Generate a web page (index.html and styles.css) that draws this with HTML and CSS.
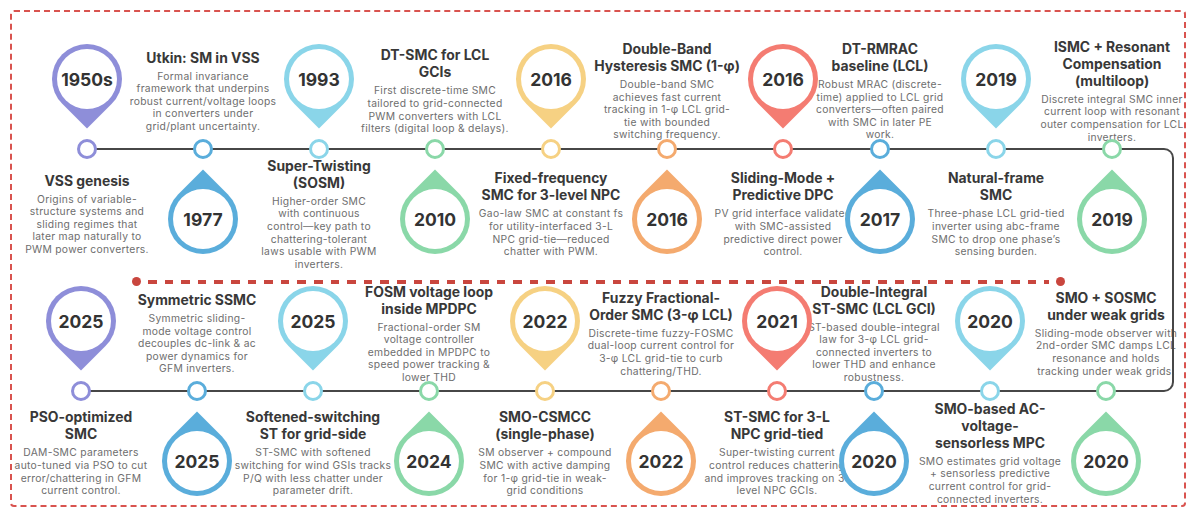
FILE: index.html
```html
<!DOCTYPE html>
<html lang="en">
<head>
<meta charset="utf-8">
<title>Sliding-mode control timeline</title>
<link rel="stylesheet" href="styles.css">
</head>
<body>
<div class="frame">
  <div class="track" aria-hidden="true"></div>

  <section class="row row-1">
    <div class="item pin-top c-purple">
      <div class="slot slot-top"><div class="pin"><span class="year">1950s</span></div></div>
      <span class="marker"></span>
      <div class="slot slot-bottom"><div class="text"><h3 class="title">VSS genesis</h3><p class="desc">Origins of variable-<br>structure systems and<br>sliding regimes that<br>later map naturally to<br>PWM power converters.</p></div></div>
    </div>
    <div class="item pin-bottom c-blue">
      <div class="slot slot-top"><div class="text"><h3 class="title">Utkin: SM in VSS</h3><p class="desc">Formal invariance<br>framework that underpins<br>robust current/voltage loops<br>in converters under<br>grid/plant uncertainty.</p></div></div>
      <span class="marker"></span>
      <div class="slot slot-bottom"><div class="pin"><span class="year">1977</span></div></div>
    </div>
    <div class="item pin-top c-cyan">
      <div class="slot slot-top"><div class="pin"><span class="year">1993</span></div></div>
      <span class="marker"></span>
      <div class="slot slot-bottom"><div class="text"><h3 class="title">Super-Twisting<br>(SOSM)</h3><p class="desc">Higher-order SMC<br>with continuous<br>control—key path to<br>chattering-tolerant<br>laws usable with PWM<br>inverters.</p></div></div>
    </div>
    <div class="item pin-bottom c-green">
      <div class="slot slot-top"><div class="text"><h3 class="title">DT-SMC for LCL<br>GCIs</h3><p class="desc">First discrete-time SMC<br>tailored to grid-connected<br>PWM converters with LCL<br>filters (digital loop &amp; delays).</p></div></div>
      <span class="marker"></span>
      <div class="slot slot-bottom"><div class="pin"><span class="year">2010</span></div></div>
    </div>
    <div class="item pin-top c-yellow">
      <div class="slot slot-top"><div class="pin"><span class="year">2016</span></div></div>
      <span class="marker"></span>
      <div class="slot slot-bottom"><div class="text"><h3 class="title">Fixed-frequency<br>SMC for 3-level NPC</h3><p class="desc">Gao-law SMC at constant fs<br>for utility-interfaced 3-L<br>NPC grid-tie—reduced<br>chatter with PWM.</p></div></div>
    </div>
    <div class="item pin-bottom c-orange">
      <div class="slot slot-top"><div class="text"><h3 class="title">Double-Band<br>Hysteresis SMC (1-φ)</h3><p class="desc">Double-band SMC<br>achieves fast current<br>tracking in 1-φ LCL grid-<br>tie with bounded<br>switching frequency.</p></div></div>
      <span class="marker"></span>
      <div class="slot slot-bottom"><div class="pin"><span class="year">2016</span></div></div>
    </div>
    <div class="item pin-top c-red">
      <div class="slot slot-top"><div class="pin"><span class="year">2016</span></div></div>
      <span class="marker"></span>
      <div class="slot slot-bottom"><div class="text"><h3 class="title">Sliding-Mode +<br>Predictive DPC</h3><p class="desc">PV grid interface validated<br>with SMC-assisted<br>predictive direct power<br>control.</p></div></div>
    </div>
    <div class="item near pin-bottom c-blue">
      <div class="slot slot-top"><div class="text"><h3 class="title">DT-RMRAC<br>baseline (LCL)</h3><p class="desc">Robust MRAC (discrete-<br>time) applied to LCL grid<br>converters—often paired<br>with SMC in later PE<br>work.</p></div></div>
      <span class="marker"></span>
      <div class="slot slot-bottom"><div class="pin"><span class="year">2017</span></div></div>
    </div>
    <div class="item pin-top c-cyan">
      <div class="slot slot-top"><div class="pin"><span class="year">2019</span></div></div>
      <span class="marker"></span>
      <div class="slot slot-bottom"><div class="text"><h3 class="title">Natural-frame<br>SMC</h3><p class="desc">Three-phase LCL grid-tied<br>inverter using abc-frame<br>SMC to drop one phase’s<br>sensing burden.</p></div></div>
    </div>
    <div class="item pin-bottom c-green">
      <div class="slot slot-top"><div class="text"><h3 class="title">ISMC + Resonant<br>Compensation<br>(multiloop)</h3><p class="desc">Discrete integral SMC inner<br>current loop with resonant<br>outer compensation for LCL<br>inverters.</p></div></div>
      <span class="marker"></span>
      <div class="slot slot-bottom"><div class="pin"><span class="year">2019</span></div></div>
    </div>
  </section>

  <div class="divider" aria-hidden="true"><span class="dot"></span><span class="dashes"></span><span class="dot"></span></div>

  <section class="row row-2">
    <div class="item pin-top c-purple">
      <div class="slot slot-top"><div class="pin"><span class="year">2025</span></div></div>
      <span class="marker"></span>
      <div class="slot slot-bottom"><div class="text"><h3 class="title">PSO-optimized<br>SMC</h3><p class="desc">DAM-SMC parameters<br>auto-tuned via PSO to cut<br>error/chattering in GFM<br>current control.</p></div></div>
    </div>
    <div class="item pin-bottom c-blue">
      <div class="slot slot-top"><div class="text"><h3 class="title">Symmetric SSMC</h3><p class="desc">Symmetric sliding-<br>mode voltage control<br>decouples dc-link &amp; ac<br>power dynamics for<br>GFM inverters.</p></div></div>
      <span class="marker"></span>
      <div class="slot slot-bottom"><div class="pin"><span class="year">2025</span></div></div>
    </div>
    <div class="item pin-top c-cyan">
      <div class="slot slot-top"><div class="pin"><span class="year">2025</span></div></div>
      <span class="marker"></span>
      <div class="slot slot-bottom"><div class="text"><h3 class="title">Softened-switching<br>ST for grid-side</h3><p class="desc">ST-SMC with softened<br>switching for wind GSIs tracks<br>P/Q with less chatter under<br>parameter drift.</p></div></div>
    </div>
    <div class="item pin-bottom c-green">
      <div class="slot slot-top"><div class="text"><h3 class="title">FOSM voltage loop<br>inside MPDPC</h3><p class="desc">Fractional-order SM<br>voltage controller<br>embedded in MPDPC to<br>speed power tracking &amp;<br>lower THD</p></div></div>
      <span class="marker"></span>
      <div class="slot slot-bottom"><div class="pin"><span class="year">2024</span></div></div>
    </div>
    <div class="item pin-top c-yellow">
      <div class="slot slot-top"><div class="pin"><span class="year">2022</span></div></div>
      <span class="marker"></span>
      <div class="slot slot-bottom"><div class="text"><h3 class="title">SMO-CSMCC<br>(single-phase)</h3><p class="desc">SM observer + compound<br>SMC with active damping<br>for 1-φ grid-tie in weak-<br>grid conditions</p></div></div>
    </div>
    <div class="item pin-bottom c-orange">
      <div class="slot slot-top"><div class="text"><h3 class="title">Fuzzy Fractional-<br>Order SMC (3-φ LCL)</h3><p class="desc">Discrete-time fuzzy-FOSMC<br>dual-loop current control for<br>3-φ LCL grid-tie to curb<br>chattering/THD.</p></div></div>
      <span class="marker"></span>
      <div class="slot slot-bottom"><div class="pin"><span class="year">2022</span></div></div>
    </div>
    <div class="item pin-top c-red">
      <div class="slot slot-top"><div class="pin"><span class="year">2021</span></div></div>
      <span class="marker"></span>
      <div class="slot slot-bottom"><div class="text"><h3 class="title">ST-SMC for 3-L<br>NPC grid-tied</h3><p class="desc">Super-twisting current<br>control reduces chattering<br>and improves tracking on 3-<br>level NPC GCIs.</p></div></div>
    </div>
    <div class="item near pin-bottom c-blue">
      <div class="slot slot-top"><div class="text"><h3 class="title">Double-Integral<br>ST-SMC (LCL GCI)</h3><p class="desc">ST-based double-integral<br>law for 3-φ LCL grid-<br>connected inverters to<br>lower THD and enhance<br>robustness.</p></div></div>
      <span class="marker"></span>
      <div class="slot slot-bottom"><div class="pin"><span class="year">2020</span></div></div>
    </div>
    <div class="item pin-top c-cyan">
      <div class="slot slot-top"><div class="pin"><span class="year">2020</span></div></div>
      <span class="marker"></span>
      <div class="slot slot-bottom"><div class="text"><h3 class="title">SMO-based AC-<br>voltage-<br>sensorless MPC</h3><p class="desc">SMO estimates grid voltage<br>+ sensorless predictive<br>current control for grid-<br>connected inverters.</p></div></div>
    </div>
    <div class="item pin-bottom c-green">
      <div class="slot slot-top"><div class="text"><h3 class="title">SMO + SOSMC<br>under weak grids</h3><p class="desc">Sliding-mode observer with<br>2nd-order SMC damps LCL<br>resonance and holds<br>tracking under weak grids.</p></div></div>
      <span class="marker"></span>
      <div class="slot slot-bottom"><div class="pin"><span class="year">2020</span></div></div>
    </div>
  </section>
</div>
</body>
</html>
```

FILE: styles.css
```css
html, body {
  margin: 0;
  padding: 0;
  background: #ffffff;
  overflow: hidden;
}

body {
  font-family: "Inter", "Open Sans", sans-serif;
  color: #383838;
}

.frame {
  position: relative;
  margin: 10px;
  height: 497px;
  box-sizing: border-box;
  border: 2px dashed #d9534f;
  border-radius: 4px;
  padding-top: 31px;
}

/* connector that snakes from row 1 to row 2 */
.track {
  position: absolute;
  top: 136px;
  left: 69px;
  width: 1093px;
  height: 244px;
  box-sizing: border-box;
  border: 2px solid #474747;
  border-left: 0;
  border-radius: 0 10px 10px 0;
}

.row {
  display: flex;
}

.row-1 {
  padding-left: 17px;
  --top: 96px;
  --bottom: 118px;
  --bottom-pad: 8px;
}

.row-2 {
  padding-left: 11px;
  --top: 95px;
  --bottom: 104px;
  --bottom-pad: 0px;
}

.item {
  flex: 0 0 116px;
  display: flex;
  flex-direction: column;
  align-items: center;
}

.item.near {
  margin-left: -19px;
}

.c-purple { --c: #8e8ed9; }
.c-blue   { --c: #5aaddb; }
.c-cyan   { --c: #8ad5e9; }
.c-green  { --c: #8ad8a8; }
.c-yellow { --c: #f6d183; }
.c-orange { --c: #f4aa6e; }
.c-red    { --c: #f47c72; }

.slot {
  width: 100%;
  box-sizing: border-box;
  display: flex;
  flex-direction: column;
  align-items: center;
  justify-content: center;
}

.slot-top {
  height: var(--top);
}

.slot-bottom {
  height: var(--bottom);
  padding-bottom: var(--bottom-pad);
}

.marker {
  position: relative;
  z-index: 1;
  flex: none;
  width: 20px;
  height: 20px;
  box-sizing: border-box;
  border: 3px solid var(--c);
  border-radius: 50%;
  background: #ffffff;
}

/* map-pin */
.pin {
  position: relative;
  flex: none;
  width: 70px;
  height: 70px;
  display: flex;
  align-items: center;
  justify-content: center;
}

.pin::before {
  content: "";
  position: absolute;
  inset: 0;
  background: var(--c);
  transform: rotate(45deg);
}

.slot-top .pin {
  margin-top: auto;
  margin-bottom: 25px;
}

.slot-top .pin::before {
  border-radius: 50% 50% 0 50%;
}

.slot-bottom .pin {
  margin-top: 25px;
  margin-bottom: auto;
}

.slot-bottom .pin::before {
  border-radius: 0 50% 50% 50%;
}

.year {
  position: relative;
  width: 60px;
  height: 60px;
  border-radius: 50%;
  background: #ffffff;
  display: flex;
  align-items: center;
  justify-content: center;
  font-weight: 700;
  font-size: 17.5px;
  color: #333333;
}

/* text blocks */
.text {
  width: 160px;
  margin: 0 -22px;
  text-align: center;
  white-space: nowrap;
}

.title {
  margin: 0;
  font-size: 13.9px;
  line-height: 17px;
  font-weight: 700;
  color: #383838;
}

.desc {
  margin: 3px 0 0;
  font-size: 10.3px;
  line-height: 12.6px;
  letter-spacing: 0.3px;
  font-weight: 400;
  color: #6e6e6e;
}

/* dashed separator between the two rows */
.divider {
  display: flex;
  align-items: center;
  height: 9px;
  width: 933px;
  margin-left: 120px;
}

.dot {
  flex: none;
  width: 9px;
  height: 9px;
  border-radius: 50%;
  background: #c9463e;
}

.dashes {
  flex: 1;
  height: 4px;
  margin: 0 7px;
  background: repeating-linear-gradient(90deg, #c9463e 0 8.5px, transparent 8.5px 16.6px);
}
```
